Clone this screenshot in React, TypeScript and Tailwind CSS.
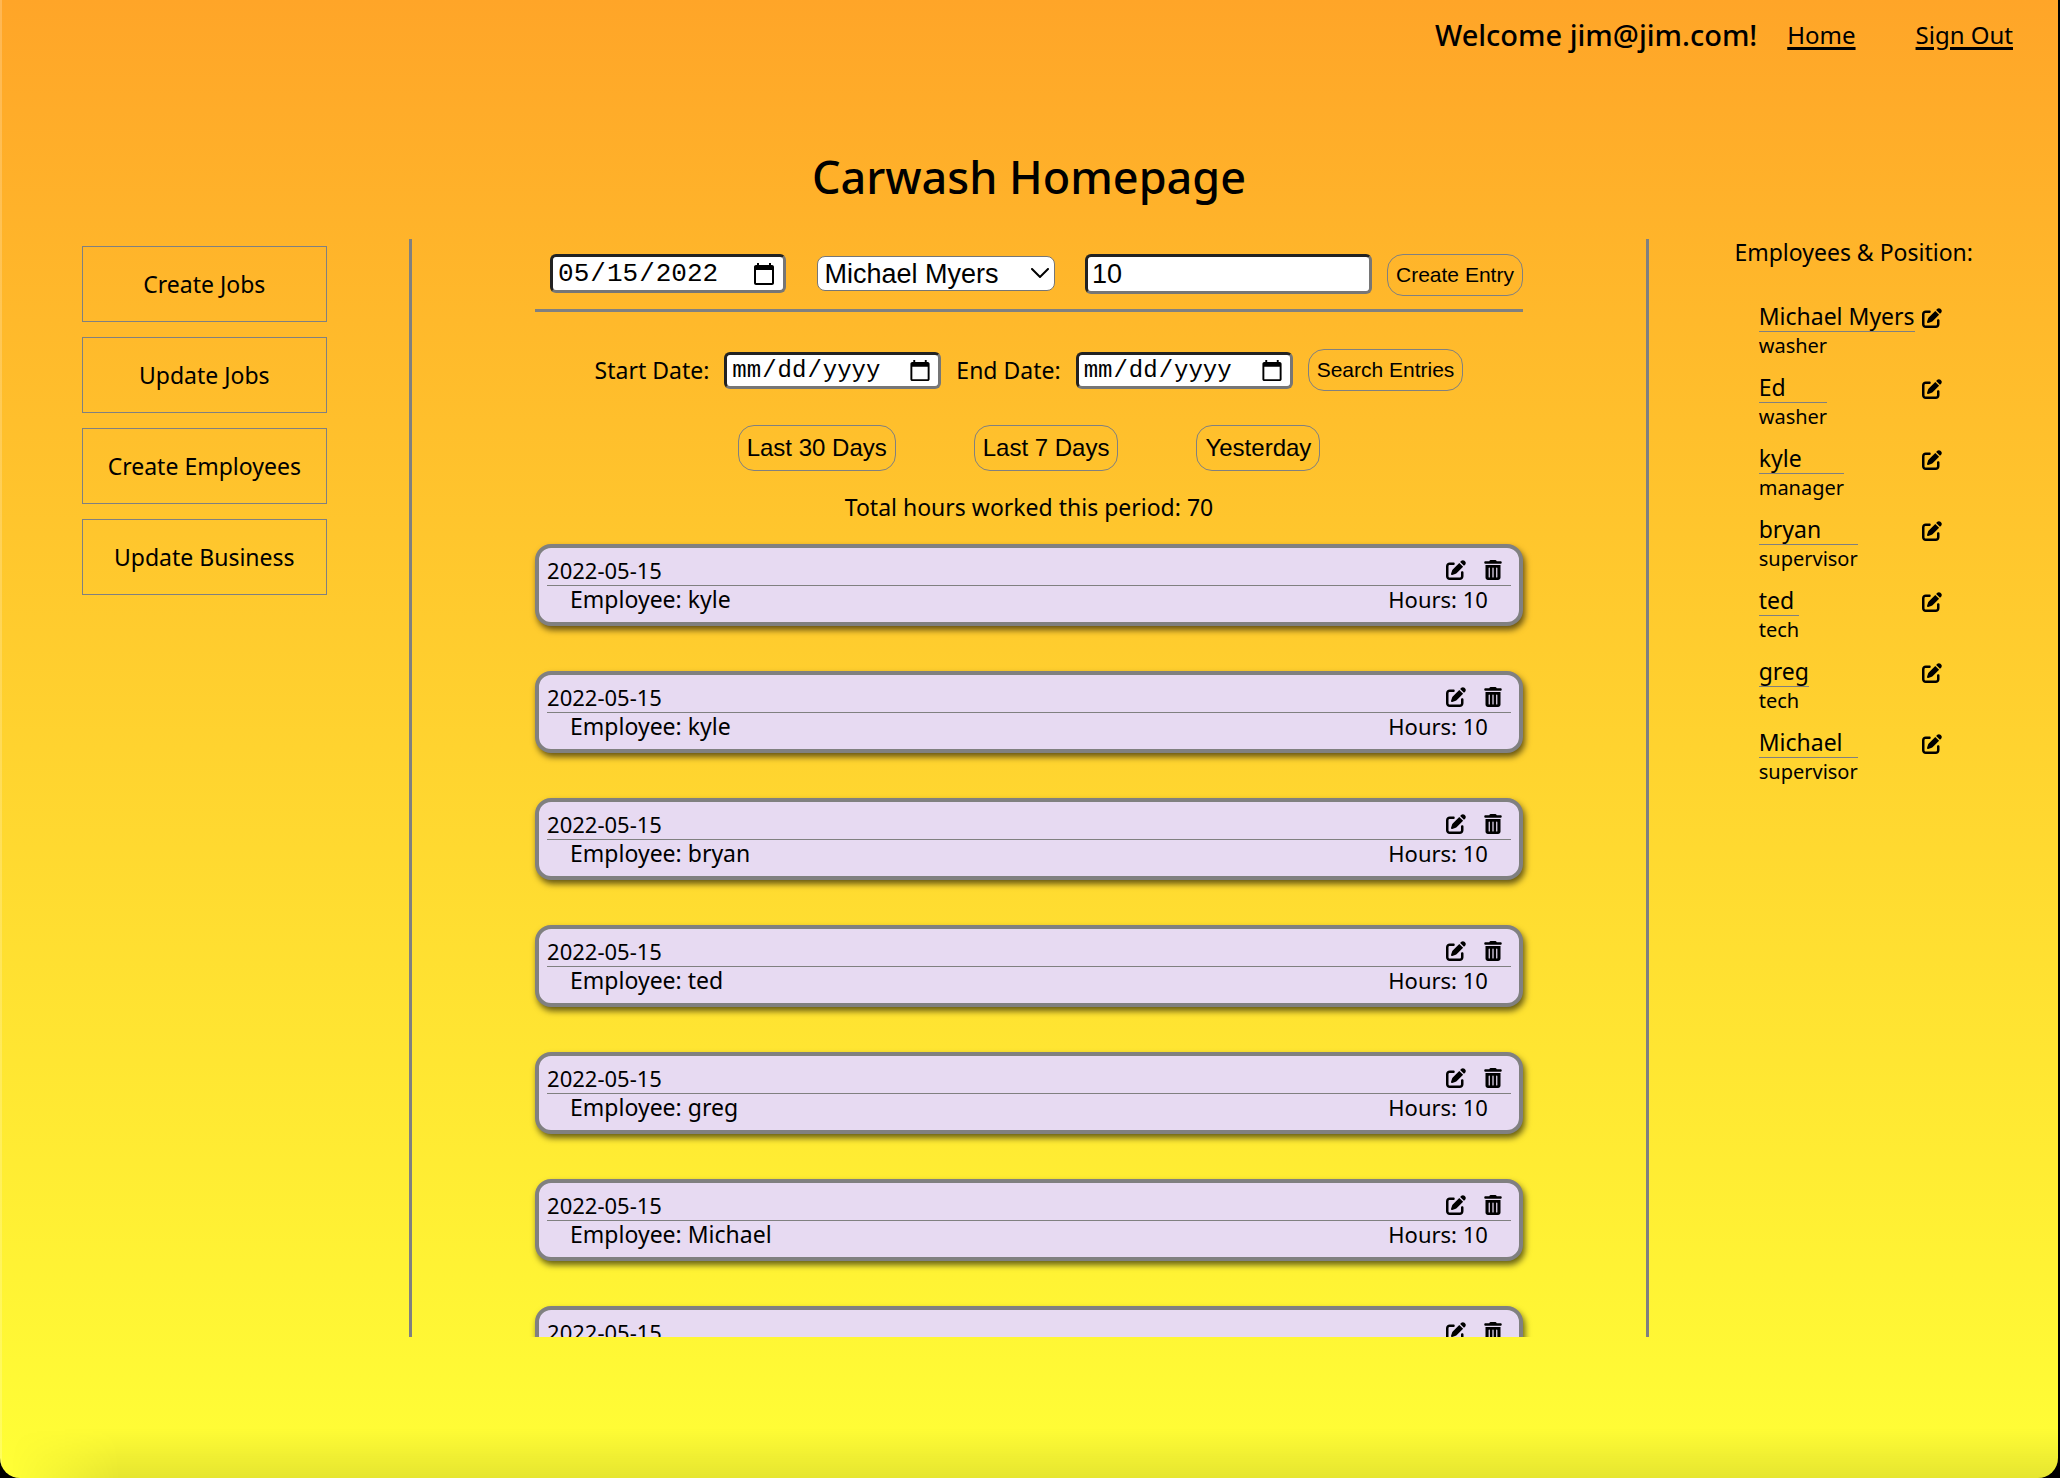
import React from "react";
import { FaPenToSquare, FaTrashCan } from "react-icons/fa6";

const navActions = ["Create Jobs", "Update Jobs", "Create Employees", "Update Business"];

const employees = [
  { name: "Michael Myers", position: "washer" },
  { name: "Ed", position: "washer" },
  { name: "kyle", position: "manager" },
  { name: "bryan", position: "supervisor" },
  { name: "ted", position: "tech" },
  { name: "greg", position: "tech" },
  { name: "Michael", position: "supervisor" },
];

const entries = ["kyle", "kyle", "bryan", "ted", "greg", "Michael", "Michael Myers"].map((employee) => ({
  employee,
  date: "2022-05-15",
  hours: 10,
}));

const fieldClass =
  "rounded-md border-[3px] border-t-[#222222] border-l-[#222222] border-r-[#767676] border-b-[#767676] bg-white px-1 outline-none";
const pillClass =
  "rounded-2xl border border-[#808080] px-2 font-['Liberation_Sans',sans-serif] whitespace-nowrap";

function Header() {
  return (
    <header className="flex h-[70px] items-center justify-end pr-[45px]">
      <p className="mr-[30px] text-[29px] font-medium">Welcome jim@jim.com!</p>
      <nav className="flex gap-[60px] text-2xl">
        <a href="#home" className="underline decoration-[3px] underline-offset-[3px]">Home</a>
        <a href="#sign-out" className="underline decoration-[3px] underline-offset-[3px]">Sign Out</a>
      </nav>
    </header>
  );
}

function CreateEntryForm() {
  return (
    <form className="mt-[15px] flex items-start justify-between border-b-[3px] border-[#808080] pb-[13px] pl-[15px] font-['Liberation_Sans',sans-serif]">
      <input
        type="date"
        aria-label="Entry date"
        defaultValue="2022-05-15"
        className={fieldClass + " h-[39px] w-[236px] pt-0.5 font-['Liberation_Mono',monospace] text-[26px]"}
      />
      <div className="relative mt-0.5">
        <select
          aria-label="Employee"
          className="h-[35px] w-[238px] appearance-none rounded-lg border border-[#767676] bg-white px-[7px] text-[27px] leading-8"
        >
          {employees.map((e) => (
            <option key={e.name}>{e.name}</option>
          ))}
        </select>
        <svg viewBox="0 0 18 10" className="pointer-events-none absolute top-3 right-1.5 h-2.5 w-[18px]" fill="none" stroke="black" strokeWidth="2" strokeLinecap="round">
          <path d="M1 1l8 8 8-8" />
        </svg>
      </div>
      <div className="flex gap-[15px]">
        <input type="number" aria-label="Hours" defaultValue={10} className={fieldClass + " h-10 w-[287px] text-[27px]"} />
        <button type="button" className={pillClass + " h-[42px] text-[21px]"}>Create Entry</button>
      </div>
    </form>
  );
}

function SearchForm() {
  return (
    <form className="mt-[37px] flex items-center justify-center gap-[15px] text-[23px]">
      <label htmlFor="start">Start Date:</label>
      <input id="start" type="date" className={fieldClass + " h-[37px] w-[217px] pt-0.5 font-['Liberation_Mono',monospace] text-2xl"} />
      <label htmlFor="end">End Date:</label>
      <input id="end" type="date" className={fieldClass + " h-[37px] w-[217px] pt-0.5 font-['Liberation_Mono',monospace] text-2xl"} />
      <button type="button" className={pillClass + " h-[42px] text-[21px]"}>Search Entries</button>
    </form>
  );
}

function EntryCard({ date, employee, hours }: { date: string; employee: string; hours: number }) {
  return (
    <li className="h-[82px] rounded-2xl border-4 border-[#808080] bg-[#e7daf2] px-2 pt-[7px] shadow-[2px_4px_6px_rgba(0,0,0,0.6)]">
      <div className="flex items-center justify-between border-b border-[#808080] pr-2 text-[22px] leading-[30px]">
        <span>{date}</span>
        <span className="flex gap-[17px]">
          <button type="button" aria-label="Edit entry"><FaPenToSquare size={20} /></button>
          <button type="button" aria-label="Delete entry"><FaTrashCan size={20} /></button>
        </span>
      </div>
      <div className="flex items-center justify-between px-[23px] text-[22px] leading-[26px]">
        <span className="text-[23px]">Employee: {employee}</span>
        <span>Hours: {hours}</span>
      </div>
    </li>
  );
}

export default function App() {
  return (
    <div className="h-screen bg-black pr-0.5 font-['Noto_Sans',sans-serif] text-black">
      <div className="relative flex h-full flex-col overflow-hidden rounded-b-[20px] bg-linear-to-b from-[#ffa528] to-[#ffff36]">
        <Header />
        <h1 className="mt-[72px] mb-[27px] text-center text-[45px] leading-[70px] font-medium">Carwash Homepage</h1>
        <main className="mb-[141px] grid min-h-0 flex-1 grid-cols-[1fr_3fr_1fr]">
          <nav className="flex flex-col items-center gap-[15px] border-r-[3px] border-[#808080] pt-[7px]">
            {navActions.map((label) => (
              <button key={label} type="button" className="h-[76px] w-3/5 border border-[#808080] text-[23px] whitespace-nowrap">
                {label}
              </button>
            ))}
          </nav>
          <section className="overflow-y-auto [scrollbar-width:none]">
            <div className="mx-auto w-4/5">
              <CreateEntryForm />
              <SearchForm />
              <div className="mt-[34px] flex justify-center gap-[78px]">
                {["Last 30 Days", "Last 7 Days", "Yesterday"].map((label) => (
                  <button key={label} type="button" className={pillClass + " h-[46px] text-2xl"}>{label}</button>
                ))}
              </div>
              <p className="mt-5 text-center text-[23px] leading-8">Total hours worked this period: 70</p>
              <ul className="mt-[21px] flex flex-col gap-[45px]">
                {entries.map((entry, i) => (
                  <EntryCard key={i} {...entry} />
                ))}
              </ul>
            </div>
          </section>
          <aside className="border-l-[3px] border-[#808080]">
            <h2 className="text-center text-[23px] leading-[26px]">Employees &amp; Position:</h2>
            <ul className="mx-auto mt-9 flex w-[190px] flex-col gap-[13px] pr-[7px]">
              {employees.map((e) => (
                <li key={e.name} className="flex items-start justify-between">
                  <div className="whitespace-nowrap">
                    <p className="border-b border-[#808080] text-[23px] leading-[30px]">{e.name}</p>
                    <p className="text-[20px] leading-[27px]">{e.position}</p>
                  </div>
                  <button type="button" aria-label={"Edit " + e.name} className="mt-[7px]"><FaPenToSquare size={20} /></button>
                </li>
              ))}
            </ul>
          </aside>
        </main>
        <div className="pointer-events-none absolute inset-y-0 left-0 w-0.5 bg-white/20" />
        <div className="pointer-events-none absolute inset-x-0 bottom-0 h-[50px] bg-linear-to-b from-transparent to-black/10 [mask-image:linear-gradient(to_right,transparent_10px,black_120px)]" />
      </div>
    </div>
  );
}
